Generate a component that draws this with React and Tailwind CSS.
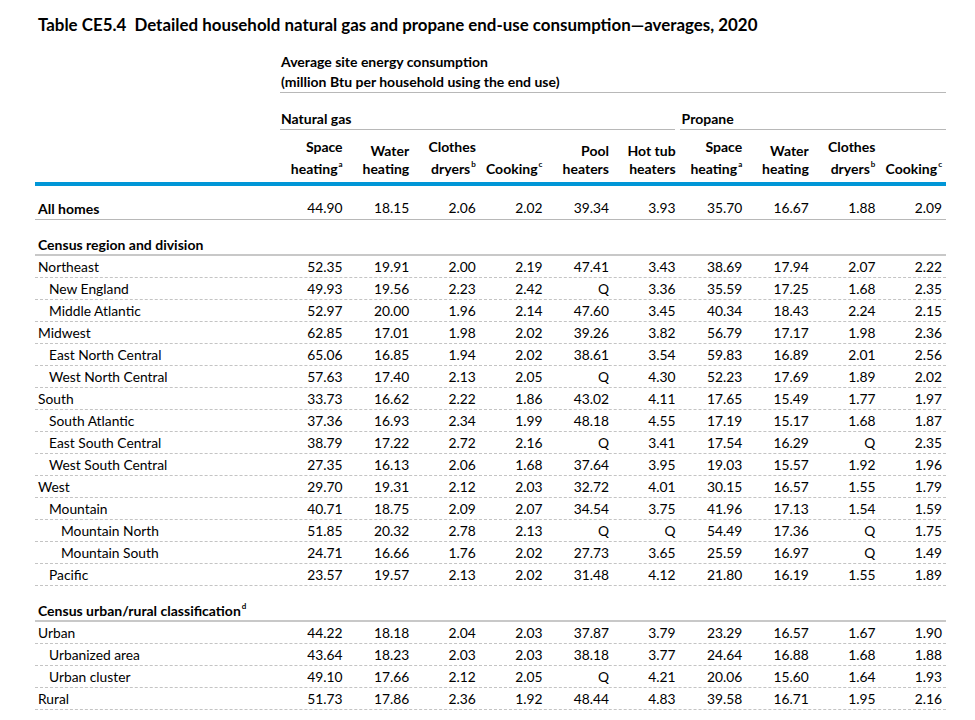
import React from "react";

// Table CE5.4 — natural gas + propane end-use averages, laid out on one shared grid
const GRID = "grid grid-cols-[245px_repeat(10,minmax(0,1fr))]";

const cols = [
  ["Space", "heating", "a"],
  ["Water", "heating"],
  ["Clothes", "dryers", "b"],
  [null, "Cooking", "c"],
  ["Pool", "heaters"],
  ["Hot tub", "heaters"],
  ["Space", "heating", "a"],
  ["Water", "heating"],
  ["Clothes", "dryers", "b"],
  [null, "Cooking", "c"],
];

const sections = [
  {
    title: "Census region and division",
    rows: [
      [0, "Northeast", "52.35 19.91 2.00 2.19 47.41 3.43 38.69 17.94 2.07 2.22"],
      [1, "New England", "49.93 19.56 2.23 2.42 Q 3.36 35.59 17.25 1.68 2.35"],
      [1, "Middle Atlantic", "52.97 20.00 1.96 2.14 47.60 3.45 40.34 18.43 2.24 2.15"],
      [0, "Midwest", "62.85 17.01 1.98 2.02 39.26 3.82 56.79 17.17 1.98 2.36"],
      [1, "East North Central", "65.06 16.85 1.94 2.02 38.61 3.54 59.83 16.89 2.01 2.56"],
      [1, "West North Central", "57.63 17.40 2.13 2.05 Q 4.30 52.23 17.69 1.89 2.02"],
      [0, "South", "33.73 16.62 2.22 1.86 43.02 4.11 17.65 15.49 1.77 1.97"],
      [1, "South Atlantic", "37.36 16.93 2.34 1.99 48.18 4.55 17.19 15.17 1.68 1.87"],
      [1, "East South Central", "38.79 17.22 2.72 2.16 Q 3.41 17.54 16.29 Q 2.35"],
      [1, "West South Central", "27.35 16.13 2.06 1.68 37.64 3.95 19.03 15.57 1.92 1.96"],
      [0, "West", "29.70 19.31 2.12 2.03 32.72 4.01 30.15 16.57 1.55 1.79"],
      [1, "Mountain", "40.71 18.75 2.09 2.07 34.54 3.75 41.96 17.13 1.54 1.59"],
      [2, "Mountain North", "51.85 20.32 2.78 2.13 Q Q 54.49 17.36 Q 1.75"],
      [2, "Mountain South", "24.71 16.66 1.76 2.02 27.73 3.65 25.59 16.97 Q 1.49"],
      [1, "Pacific", "23.57 19.57 2.13 2.02 31.48 4.12 21.80 16.19 1.55 1.89"],
    ],
  },
  {
    title: "Census urban/rural classification",
    sup: "d",
    rows: [
      [0, "Urban", "44.22 18.18 2.04 2.03 37.87 3.79 23.29 16.57 1.67 1.90"],
      [1, "Urbanized area", "43.64 18.23 2.03 2.03 38.18 3.77 24.64 16.88 1.68 1.88"],
      [1, "Urban cluster", "49.10 17.66 2.12 2.05 Q 4.21 20.06 15.60 1.64 1.93"],
      [0, "Rural", "51.73 17.86 2.36 1.92 48.44 4.83 39.58 16.71 1.95 2.16"],
    ],
  },
];

const indent = ["pl-[3px]", "pl-[14px]", "pl-[26px]"];

function Sup({ c }) {
  return <sup className="text-[8px] -top-[7px] ml-[1px] font-bold">{c}</sup>;
}

function DataRow({ level = 0, label, values, solid, bold }) {
  return (
    <div
      className={`${GRID} h-[22px] items-center ${bold ? "" : "pt-[1px]"} ${
        solid ? "border-b border-[#b8b8b8]" : "border-b border-dashed border-[#c4c4c4]"
      }`}
    >
      <div className={`${indent[level]} ${bold ? "font-bold text-[14px]" : ""}`}>{label}</div>
      {values.split(" ").map((v, i) => (
        <div key={i} className="text-right pr-[4px]">
          {v}
        </div>
      ))}
    </div>
  );
}

export default function App() {
  return (
    <div className="w-[975px] h-[720px] bg-white text-black text-[13.8px] font-['Lato','Liberation_Sans',sans-serif] overflow-hidden">
      <h1 className="pt-[15px] pl-[38px] text-[16.9px] leading-[20px] font-bold">
        Table CE5.4&nbsp; Detailed household natural gas and propane end-use consumption—averages, 2020
      </h1>

      <div className="ml-[35px] w-[911px] mt-[17px]">
        {/* unit caption */}
        <div className={GRID}>
          <div className="col-start-2 col-span-10 pl-[1px] font-bold text-[14px] leading-[20px] border-b border-[#b8b8b8]">
            <div>Average site energy consumption</div>
            <div>(million Btu per household using the end use)</div>
          </div>
        </div>

        {/* fuel groups */}
        <div className={`${GRID} mt-[15px] text-[14px]`}>
          <div className="col-start-2 col-span-6 mr-[5px] pl-[1px] font-bold leading-[21px] border-b border-[#b8b8b8]">
            Natural gas
          </div>
          <div className="col-span-4 pl-[2px] font-bold leading-[21px] border-b border-[#b8b8b8]">
            Propane
          </div>
        </div>

        {/* column heads */}
        <div className={`${GRID} h-[56px] items-end pb-[4px] border-b-4 border-[#0096d7] font-bold text-[14px]`}>
          <div />
          {cols.map(([top, bottom, s], i) => (
            <div key={i} className="flex flex-col items-end pr-[4px]">
              {top && <div className="leading-[18px]">{top}</div>}
              <div className={`leading-[18px] ${s && top ? "mt-[4px]" : ""}`}>
                {bottom}
                {s && <Sup c={s} />}
              </div>
            </div>
          ))}
        </div>

        <div className="mt-[12px]">
          <DataRow label="All homes" bold solid values="44.90 18.15 2.06 2.02 39.34 3.93 35.70 16.67 1.88 2.09" />
        </div>

        {sections.map((sec) => (
          <div key={sec.title} className="mt-[13px]">
            <div className="h-[23px] flex items-center pt-[2px] pl-[3px] font-bold text-[14px] border-b-2 border-[#c8c8c8]">
              <span>
                {sec.title}
                {sec.sup && <Sup c={sec.sup} />}
              </span>
            </div>
            {sec.rows.map(([lvl, label, vals]) => (
              <DataRow key={label} level={lvl} label={label} values={vals} />
            ))}
          </div>
        ))}
      </div>
    </div>
  );
}
